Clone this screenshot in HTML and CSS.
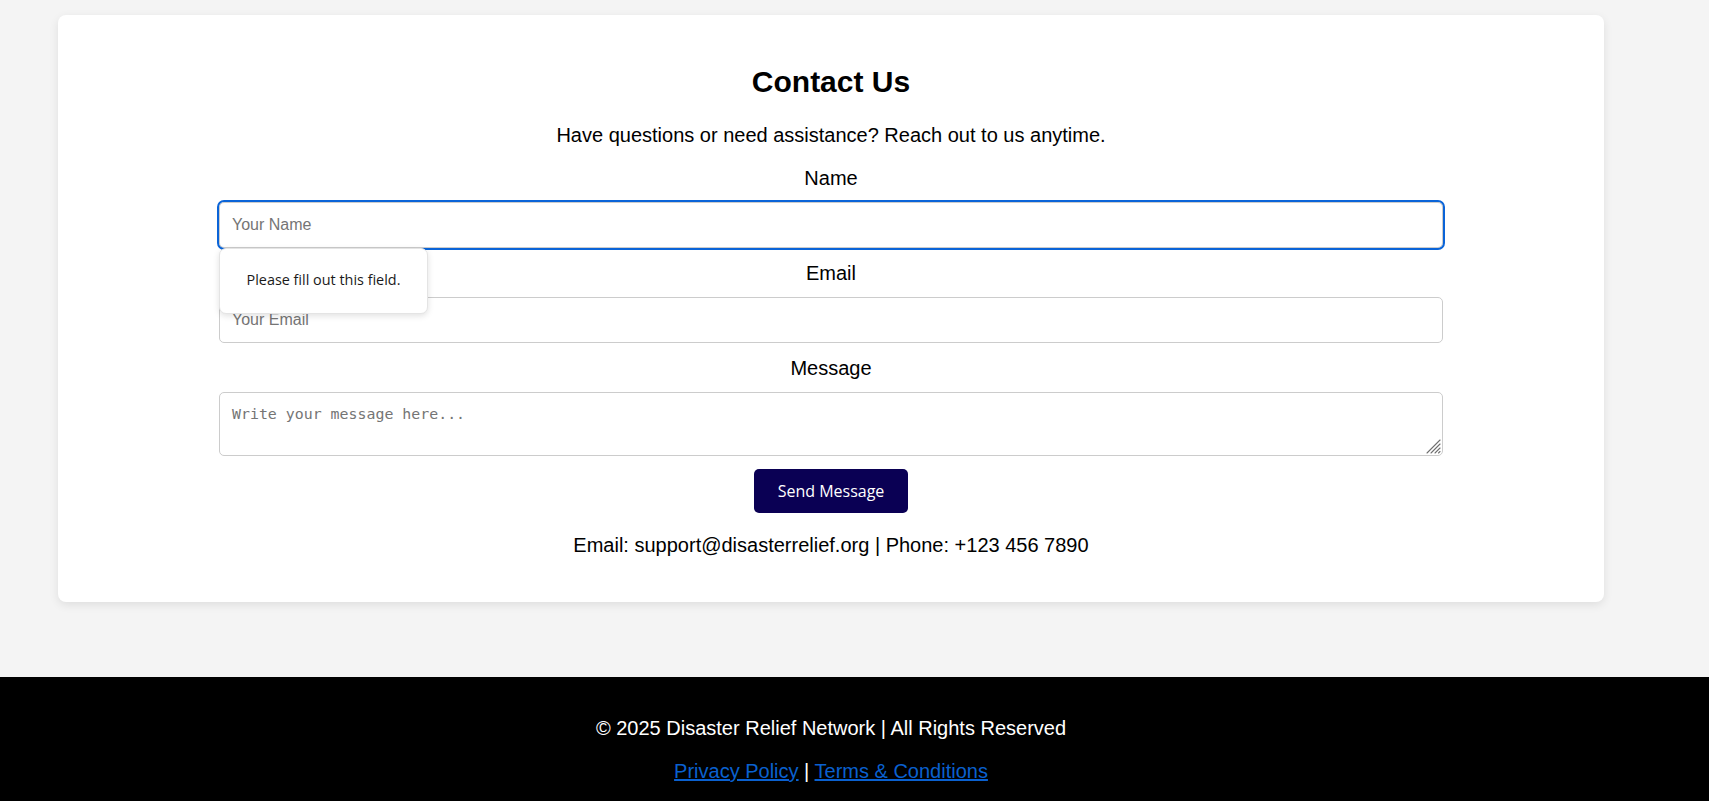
FILE: index.html
```html
<!DOCTYPE html>
<html lang="en">
<head>
<meta charset="utf-8">
<title>Contact Us - Disaster Relief Network</title>
<link rel="stylesheet" href="styles.css">
</head>
<body>
<main class="page">
  <section class="card">
    <h2 class="title">Contact Us</h2>
    <p class="intro">Have questions or need assistance? Reach out to us anytime.</p>
    <form class="form">
      <label class="label" for="name">Name</label>
      <div class="field-wrap">
        <input class="field field-focus" id="name" type="text" placeholder="Your Name">
        <div class="bubble">Please fill out this field.</div>
      </div>
      <label class="label" for="email">Email</label>
      <input class="field" id="email" type="email" placeholder="Your Email">
      <label class="label" for="msg">Message</label>
      <div class="area-wrap">
        <textarea class="field area" id="msg" placeholder="Write your message here..."></textarea>
        <svg class="grip" width="16" height="16" viewBox="0 0 16 16" aria-hidden="true">
          <g stroke="#6f6f6f" stroke-width="1.1" stroke-linecap="round">
            <line x1="2" y1="15" x2="15" y2="2"/>
            <line x1="6" y1="15" x2="15" y2="6"/>
            <line x1="10" y1="15" x2="15" y2="10"/>
            <line x1="13.5" y1="15" x2="15" y2="13.5"/>
          </g>
        </svg>
      </div>
      <button class="send" type="button">Send Message</button>
    </form>
    <p class="contact">Email: support@disasterrelief.org | Phone: +123 456 7890</p>
  </section>
</main>
<footer class="footer">
  <div class="footer-inner">
    <p class="foot-line">© 2025 Disaster Relief Network | All Rights Reserved</p>
    <p class="foot-line foot-links"><a href="#" class="foot-link">Privacy Policy</a> | <a href="#" class="foot-link">Terms &amp; Conditions</a></p>
  </div>
</footer>
</body>
</html>
```
FILE: styles.css
```css
html, body {
  margin: 0;
  padding: 0;
}
body {
  background: #f4f4f4;
  font-family: "Liberation Sans", Arial, sans-serif;
  font-size: 20px;
  color: #000;
}
.page {
  padding: 15px 0 75px 58px;
}
.card {
  box-sizing: border-box;
  width: 1546px;
  background: #fff;
  border-radius: 8px;
  box-shadow: 0 3px 10px rgba(0, 0, 0, 0.09);
  padding: 49px 0 45px;
  text-align: center;
}
.title {
  margin: 0;
  font-size: 30px;
  line-height: 35px;
  font-weight: bold;
}
.intro {
  margin: 25px 0 19px;
  line-height: 23px;
}
.form {
  display: flex;
  flex-direction: column;
  align-items: stretch;
  width: 1224px;
  margin: 0 auto;
}
.label {
  display: block;
  line-height: 23px;
  padding-top: 1px;
  margin-bottom: 12px;
}
.field-wrap,
.area-wrap {
  position: relative;
  margin-bottom: 13px;
}
.field {
  box-sizing: border-box;
  display: block;
  width: 100%;
  height: 46px;
  margin: 0 0 13px;
  padding: 13px 12px;
  border: 1px solid #ccc;
  border-radius: 5px;
  font-family: "Liberation Sans", Arial, sans-serif;
  font-size: 16px;
  background: #fff;
  color: #000;
}
.field-wrap .field,
.area-wrap .field {
  margin-bottom: 0;
}
.field::placeholder {
  color: #757575;
}
.field-focus {
  outline: 2px solid #0a64d8;
  outline-offset: -0.5px;
}
.area {
  height: 64px;
  padding: 12px 12px;
  font-family: "DejaVu Sans Mono", "Liberation Mono", monospace;
  font-size: 14.9px;
  resize: none;
}
.grip {
  position: absolute;
  right: 2px;
  bottom: 2px;
  pointer-events: none;
}
.bubble {
  position: absolute;
  left: 0;
  top: 46px;
  box-sizing: border-box;
  width: 209px;
  height: 66px;
  padding-bottom: 3px;
  display: flex;
  align-items: center;
  justify-content: center;
  background: #fff;
  border: 1px solid #e4e4e4;
  border-radius: 7px;
  box-shadow: 0 2px 6px rgba(0, 0, 0, 0.12);
  font-family: "Open Sans", "Noto Sans", sans-serif;
  font-size: 14.4px;
  color: #1a1a1a;
  z-index: 2;
}
.send {
  align-self: center;
  height: 44px;
  width: 154px;
  padding: 0;
  border: none;
  border-radius: 5px;
  background: #0a0054;
  color: #fff;
  font-family: "Open Sans", "Noto Sans", sans-serif;
  font-size: 16px;
  cursor: pointer;
}
.contact {
  margin: 21px 0 0;
  line-height: 23px;
}
.footer {
  background: #000;
  color: #fff;
  padding: 40px 0 20px;
}
.footer-inner {
  width: 1662px;
  text-align: center;
}
.foot-line {
  margin: 0;
  line-height: 23px;
}
.foot-links {
  margin-top: 20px;
}
.foot-link {
  color: #0a60cf;
  text-decoration: underline;
}
```
